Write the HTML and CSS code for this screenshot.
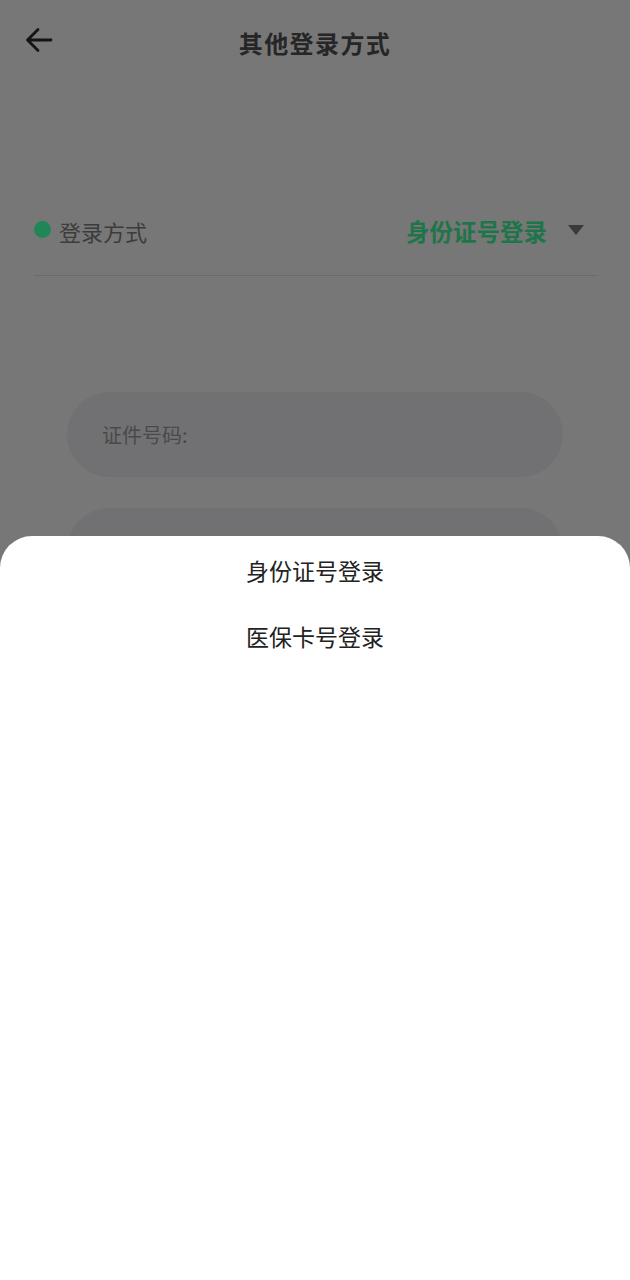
FILE: index.html
```html
<!DOCTYPE html>
<html lang="zh-CN">
<head>
<meta charset="utf-8">
<title>其他登录方式</title>
<link rel="stylesheet" href="styles.css">
</head>
<body>
<div class="page">
  <header class="header">
    <button class="back" aria-label="返回">
      <svg width="30" height="30" viewBox="0 0 30 30"><path d="M27 15H4M14 4.5L3.5 15L14 25.5" fill="none" stroke="#141414" stroke-width="2.8" stroke-linecap="round" stroke-linejoin="round"/></svg>
    </button>
    <h1 class="title">其他登录方式</h1>
  </header>
  <div class="row">
    <span class="dot"></span>
    <span class="label">登录方式</span>
    <span class="value">身份证号登录</span>
    <span class="caret"></span>
  </div>
  <div class="pill first"><span class="ph">证件号码:</span></div>
  <div class="pill"></div>
</div>
<div class="sheet">
  <div class="item">身份证号登录</div>
  <div class="item">医保卡号登录</div>
</div>
</body>
</html>
```
FILE: styles.css
```css
* { box-sizing: border-box; }
html, body { margin: 0; padding: 0; }
body {
  width: 630px;
  height: 1280px;
  overflow: hidden;
  background: #777777;
  font-family: "Noto Sans CJK SC", "Noto Sans", sans-serif;
}
.page { position: relative; }
.header {
  position: relative;
  height: 86px;
  display: flex;
  align-items: center;
  justify-content: center;
}
.back {
  position: absolute;
  left: 24px;
  top: 25px;
  padding: 0;
  border: 0;
  background: none;
  width: 30px;
  height: 30px;
}
.back svg { display: block; }
.title {
  margin: 0;
  font-size: 24px;
  font-weight: 700;
  color: #262626;
  line-height: 1;
  letter-spacing: 1.4px;
}
.row {
  margin: 126px 33px 0 34px;
  height: 64px;
  padding-bottom: 26px;
  border-bottom: 1.5px solid #6a6a6a;
  display: flex;
  align-items: center;
}
.dot {
  width: 17px;
  height: 17px;
  border-radius: 50%;
  background: #1f8757;
  margin-right: 8px;
  margin-top: -2px;
}
.label {
  font-size: 22px;
  color: #3c3c3c;
  line-height: 38px;
}
.value {
  margin-left: auto;
  font-size: 23.5px;
  font-weight: 700;
  color: #1e7549;
  line-height: 38px;
}
.caret {
  width: 0;
  height: 0;
  border-left: 8px solid transparent;
  border-right: 8px solid transparent;
  border-top: 10px solid #3a3a3a;
  margin-left: 21px;
  margin-right: 13px;
  margin-top: -2px;
}
.pill {
  margin: 31px 0 0 67px;
  width: 496px;
  height: 85px;
  border-radius: 43px;
  background: #717174;
  display: flex;
  align-items: center;
  padding-left: 35px;
}
.pill.first { margin-top: 116px; }
.ph {
  font-size: 20px;
  color: #494949;
}
.sheet {
  position: fixed;
  left: 0;
  right: 0;
  top: 536px;
  bottom: 0;
  background: #ffffff;
  border-radius: 32px 32px 0 0;
  padding-top: 1px;
}
.item {
  height: 66px;
  display: flex;
  align-items: center;
  justify-content: center;
  font-size: 23px;
  color: #222222;
}
```
